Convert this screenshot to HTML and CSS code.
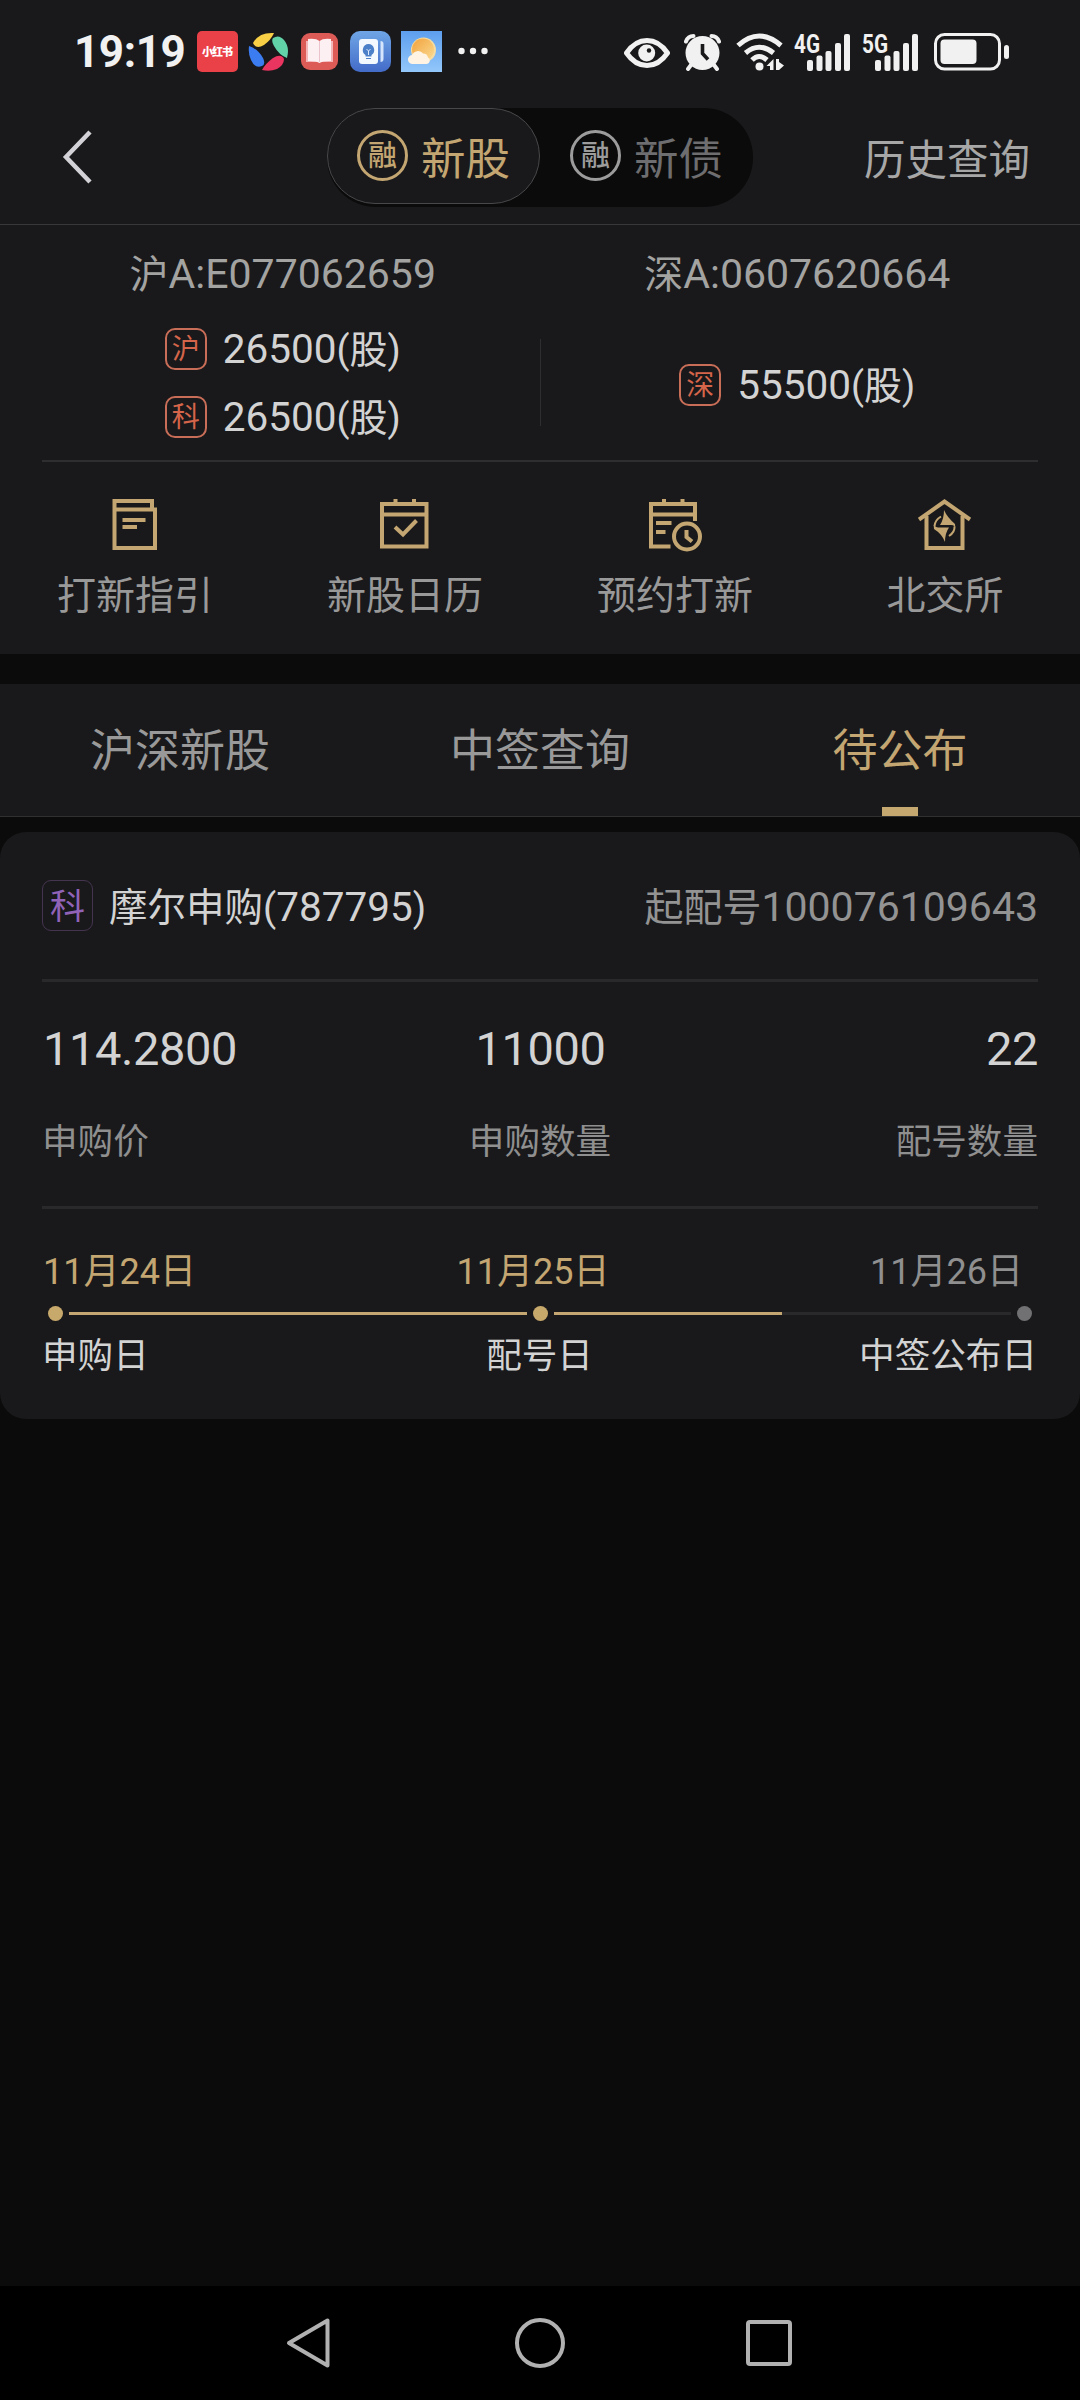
FILE: index.html
```html
<!DOCTYPE html>
<html lang="zh-CN">
  <head>
    <meta charset="UTF-8" />
    <meta name="viewport" content="width=device-width, initial-scale=1.0" />
    <title>新股申购</title>
    <link rel="stylesheet" href="styles.css" />
  </head>
  <body>
    <!-- Status bar -->
    <div class="status-bar">
      <span class="time">19:19</span>
      <div class="status-apps">
        <svg width="41" height="41" viewBox="0 0 41 41">
          <rect width="41" height="41" rx="5" fill="#ea4048" />
          <text class="xhs" x="20.5" y="25" text-anchor="middle" textLength="31">小红书</text>
        </svg>
        <svg width="41" height="41" viewBox="0 0 41 41">
          <path d="M5 12Q11 1 26 2Q23 9 16 14Q8 19 5 12Z" fill="#f8cf45" />
          <path d="M25 7Q31 3 36 9Q42 16 39 27Q31 24 26 15Q23 10 25 7Z" fill="#62d2a8" />
          <path d="M1 15Q10 18 15 27Q18 33 14 35Q7 38 3 29Q0 23 1 15Z" fill="#3b7cf0" />
          <path d="M14 39Q17 33 25 27Q33 22 36 28Q36 34 29 38Q22 41 14 39Z" fill="#ea3560" />
        </svg>
        <svg width="41" height="41" viewBox="0 0 41 41">
          <rect x="2" y="2" width="37" height="37" rx="9" fill="#dc5b56" />
          <path d="M7 10h27v21H7Z" fill="#f3b5b8" />
          <path d="M9 8q8-1 11.500 2q3.500-3 11.500-2v22q-8-.5-11.500 2q-3.500-2.500-11.500-2Z" fill="#fdf0f3" />
          <path d="M20.500 10v21" stroke="#eac3cc" />
        </svg>
        <svg width="41" height="41" viewBox="0 0 41 41">
          <defs>
            <linearGradient id="blueBg" x1="0" y1="0" x2="0" y2="1">
              <stop offset="0" stop-color="#6fa6e6" />
              <stop offset="1" stop-color="#436bc8" />
            </linearGradient>
          </defs>
          <rect width="41" height="41" rx="10" fill="url(#blueBg)" />
          <rect x="9" y="8" width="19" height="25" rx="3" fill="#f4f9ff" />
          <path d="M30.500 10q3 0 3 3v15q0 3-3 3Z" fill="#d5e5fb" />
          <path d="M18.500 13a6 6 0 0 1 3 11v1.500h-6V24a6 6 0 0 1 3-11Z" fill="#4c80c8" />
          <path d="M16 27.500h5" stroke="#4c80c8" fill="none" />
          <path d="M18.500 24v-4l-2-2M18.500 20l2-2" stroke="#dceafa" fill="none" />
        </svg>
        <svg width="41" height="41" viewBox="0 0 41 41">
          <defs>
            <linearGradient id="skyBg" x1="0" y1="0" x2="0" y2="1">
              <stop offset="0" stop-color="#5d9eee" />
              <stop offset="1" stop-color="#93c8fb" />
            </linearGradient>
            <linearGradient id="sunBg" x1="0" y1="0" x2="1" y2="1">
              <stop offset="0" stop-color="#f2a13c" />
              <stop offset="1" stop-color="#fbdc92" />
            </linearGradient>
          </defs>
          <rect width="41" height="41" fill="url(#skyBg)" />
          <circle cx="22.500" cy="19" r="12.500" fill="#f6dca0" />
          <circle cx="22" cy="18.500" r="11" fill="url(#sunBg)" />
          <path d="M12 33a4.500 4.500 0 0 1-1-9a6.500 6.500 0 0 1 11-1.500a5 5 0 0 1 5 4a3.500 3.500 0 0 1-1 6.500Z" fill="#fff4e4" />
        </svg>
      </div>
      <svg class="more" width="30" height="8" viewBox="0 0 30 8" fill="#f1f1f1">
        <circle cx="3.500" cy="4" r="3.200" />
        <circle cx="15" cy="4" r="3.200" />
        <circle cx="26.500" cy="4" r="3.200" />
      </svg>
      <div class="status-icons">
        <svg class="eye" width="46" height="38" viewBox="0 0 46 38">
          <path d="M2.500 20Q11 7.500 23 7.500T43.500 20Q35 32.500 23 32.500T2.500 20Z" fill="none" stroke="#f1f1f1" stroke-width="5" stroke-linejoin="round" />
          <circle cx="22.700" cy="20" r="8.500" fill="#f1f1f1" />
          <circle cx="25" cy="17.500" r="2.200" fill="#19191b" />
        </svg>
        <svg class="alarm" width="37" height="38" viewBox="0 0 37 38">
          <circle cx="18.500" cy="20" r="17" fill="#f1f1f1" />
          <path d="M2 8.500Q4 3 9.500 3M35 8.500Q33 3 27.500 3M7 32L4 36M30 32L33 36" stroke="#f1f1f1" stroke-width="4" stroke-linecap="round" />
          <path d="M18.500 11v9.500l5.500 6" fill="none" stroke="#19191b" stroke-width="3.600" stroke-linejoin="round" />
        </svg>
        <svg class="wifi" width="49" height="38" viewBox="0 0 49 38">
          <g fill="none" stroke="#f1f1f1" stroke-width="5">
            <path d="M3 12.500Q24 -6.500 46 12.500" />
            <path d="M10.500 20Q24 8.500 38.500 20" />
            <path d="M17 27Q24 20 32 27" />
          </g>
          <circle cx="24.500" cy="33.500" r="4" fill="#f1f1f1" />
          <path d="M38.500 37V26l-7 7h3.500v4zM41 26h3v3l5 3.500l-5 4.500H41Z" fill="#f1f1f1" />
        </svg>
        <svg class="signal" width="56" height="38" viewBox="0 0 56 38" fill="#f1f1f1">
          <text class="net" x="0" y="19.500" textLength="26" lengthAdjust="spacingAndGlyphs">4G</text>
          <rect x="13" y="27" width="6" height="11" rx="2" />
          <rect x="22.500" y="22.500" width="6" height="15.500" rx="2" />
          <rect x="31.500" y="18" width="6" height="20" rx="2" />
          <rect x="41" y="10" width="6" height="28" rx="2" />
          <rect x="50" y="1" width="6" height="37" rx="2" />
        </svg>
        <svg class="signal" width="56" height="38" viewBox="0 0 56 38" fill="#f1f1f1">
          <text class="net" x="0" y="19.500" textLength="26" lengthAdjust="spacingAndGlyphs">5G</text>
          <rect x="13" y="27" width="6" height="11" rx="2" />
          <rect x="22.500" y="22.500" width="6" height="15.500" rx="2" />
          <rect x="31.500" y="18" width="6" height="20" rx="2" />
          <rect x="41" y="10" width="6" height="28" rx="2" />
          <rect x="50" y="1" width="6" height="37" rx="2" />
        </svg>
        <svg class="battery" width="75" height="38" viewBox="0 0 75 38">
          <rect x="1.500" y="1.500" width="64" height="34.500" rx="9" fill="none" stroke="#f1f1f1" stroke-width="3" />
          <rect x="6.500" y="6.500" width="36" height="24.500" rx="4" fill="#f1f1f1" />
          <rect x="70" y="12" width="5" height="14" rx="2.500" fill="#f1f1f1" />
        </svg>
      </div>
    </div>

    <!-- Header -->
    <div class="header">
      <svg class="back" width="30" height="54" viewBox="0 0 30 54">
        <path d="M28 2L4 27L28 52" fill="none" stroke="#d3d2d6" stroke-width="4.500" />
      </svg>
      <div class="switch">
        <div class="switch-item active"><span class="ring">融</span>新股</div>
        <div class="switch-item"><span class="ring">融</span>新债</div>
      </div>
      <a class="history">历史查询</a>
    </div>

    <!-- Quota -->
    <div class="quota">
      <div class="quota-col">
        <div class="account">沪<span class="num">A:E077062659</span></div>
        <div class="amounts">
          <div class="amount"><span class="tag">沪</span><span><span class="num">26500</span>(股)</span></div>
          <div class="amount"><span class="tag">科</span><span><span class="num">26500</span>(股)</span></div>
        </div>
      </div>
      <div class="quota-line"></div>
      <div class="quota-col">
        <div class="account">深<span class="num">A:0607620664</span></div>
        <div class="amounts single">
          <div class="amount"><span class="tag">深</span><span><span class="num">55500</span>(股)</span></div>
        </div>
      </div>
    </div>

    <!-- Menu -->
    <div class="menu">
      <div class="menu-item">
        <svg width="54" height="54" viewBox="0 0 54 54" fill="none" stroke="#c3a671" stroke-width="4">
          <path d="M6.500 11.500V3H44V11.500M6.500 11.500H47V50H6.500Z" />
          <path d="M14.500 22H37.500M14.500 29H29" />
        </svg>
        <span>打新指引</span>
      </div>
      <div class="menu-item">
        <svg width="54" height="54" viewBox="0 0 54 54" fill="none" stroke="#c3a671" stroke-width="4">
          <path d="M4 6H48.500V48.500H4ZM4 16.500H48.500M17.500 1V6M36 1V6" />
          <path d="M17 29L25 36.500L38.500 22.500" />
        </svg>
        <span>新股日历</span>
      </div>
      <div class="menu-item">
        <svg width="54" height="54" viewBox="0 0 54 54" fill="none" stroke="#c3a671" stroke-width="4">
          <path d="M22.500 48.500H3V6H47V23M3 16.500H47M16 1V6M34.500 1V6" />
          <path d="M8 25H23.500M8 34H17.500" />
          <circle cx="39" cy="38.500" r="13" />
          <path d="M38.500 32V39L44 43.500" />
        </svg>
        <span>预约打新</span>
      </div>
      <div class="menu-item">
        <svg width="54" height="54" viewBox="0 0 54 54" fill="none" stroke="#c3a671" stroke-width="4">
          <path d="M1 21.500L26.500 3.500L52 21.500" />
          <path d="M8.500 18V50H44.500V18" />
          <path d="M26 12Q29 19 37 26Q38 29 36 32Q38 27 33 27H22Q26 21 26 12Z" fill="#c3a671" stroke="none" />
          <path d="M27 44Q24 36 16 31Q15 28 17 25Q16 29 20 29.500H31Q27 35 27 44Z" fill="#c3a671" stroke="none" />
          <path d="M23 18.500Q17 22 16.500 28M31 38Q37 34 36.500 28.500" stroke-width="2" />
        </svg>
        <span>北交所</span>
      </div>
    </div>

    <!-- Tabs -->
    <div class="tabs">
      <div class="tab">沪深新股</div>
      <div class="tab">中签查询</div>
      <div class="tab active">待公布</div>
    </div>

    <!-- Card -->
    <div class="card">
      <div class="card-head">
        <span class="board">科</span>
        <span class="name">摩尔申购(<span class="num">787795</span>)</span>
        <span class="start-no">起配号<span class="num">100076109643</span></span>
      </div>
      <div class="card-data">
        <div class="data-item">
          <div class="value">114.2800</div>
          <div class="label">申购价</div>
        </div>
        <div class="data-item">
          <div class="value">11000</div>
          <div class="label">申购数量</div>
        </div>
        <div class="data-item">
          <div class="value">22</div>
          <div class="label">配号数量</div>
        </div>
      </div>
      <div class="dates">
        <span class="done">11月24日</span>
        <span class="done">11月25日</span>
        <span>11月26日</span>
      </div>
      <div class="track">
        <i class="dot done"></i>
        <i class="bar done"></i>
        <i class="dot done"></i>
        <i class="bar half"></i>
        <i class="dot"></i>
      </div>
      <div class="steps">
        <span>申购日</span>
        <span>配号日</span>
        <span>中签公布日</span>
      </div>
    </div>

    <!-- System navigation -->
    <div class="nav-bar">
      <svg width="54" height="54" viewBox="0 0 54 54" fill="none" stroke="#b1b1b1" stroke-width="4">
        <path d="M5 27L43.500 4.500V49.500Z" stroke-linejoin="round" />
      </svg>
      <svg width="54" height="54" viewBox="0 0 54 54" fill="none" stroke="#b1b1b1" stroke-width="4">
        <circle cx="27" cy="27" r="23" />
      </svg>
      <svg width="54" height="54" viewBox="0 0 54 54" fill="none" stroke="#b1b1b1" stroke-width="4">
        <rect x="6" y="6" width="42" height="42" rx="2" />
      </svg>
    </div>
  </body>
</html>
```
FILE: styles.css
```css
* {
  margin: 0;
  padding: 0;
  box-sizing: border-box;
}

body {
  display: flex;
  flex-direction: column;
  width: 1080px;
  height: 2400px;
  background: #0b0b0b;
  color: #d3d3d3;
  font-family: Roboto, "Noto Sans CJK SC", sans-serif;
  font-size: 39px;
  overflow: hidden;
}

svg {
  display: block;
  flex-shrink: 0;
}

.num {
  font-size: 41px;
}

/* status bar */
.status-bar {
  display: flex;
  align-items: center;
  height: 103px;
  padding: 0 71px 0 74px;
  background: #19191b;
}

.time {
  width: 123px;
  color: #f1f1f1;
  font-size: 44px;
  font-weight: 700;
  letter-spacing: -0.4px;
}

.status-apps {
  display: flex;
  gap: 10px;
}

.xhs {
  fill: #fff;
  font-size: 11px;
  font-weight: 900;
}

.more {
  margin: 0 auto 2px 16px;
}

.status-icons {
  display: flex;
}

.alarm,
.wifi {
  margin-left: 14px;
}

.signal {
  margin-left: 10px;
  overflow: visible;
}

.signal + .signal {
  margin-left: 12px;
}

.battery {
  margin-left: 16px;
}

.net {
  font-size: 25px;
  font-weight: 700;
}

/* header */
.header {
  display: flex;
  align-items: center;
  height: 122px;
  padding: 0 50px 13px 62px;
  background: #19191b;
  border-bottom: 1px solid #38383a;
}

.switch {
  display: flex;
  width: 426px;
  height: 99px;
  margin-left: 235px;
  background: #0b0b0b;
  border-radius: 49px;
}

.switch-item {
  display: flex;
  align-items: center;
  gap: 13px;
  width: 213px;
  height: 96px;
  padding-left: 30px;
  color: #6e6e70;
  font-size: 44.5px;
}

.switch-item.active {
  padding-left: 29px;
  background: #19191b;
  border: 1px solid #48484a;
  border-radius: 48px;
  color: #c3a671;
}

.ring {
  width: 51px;
  height: 51px;
  border: 3px solid #9c9c9c;
  border-radius: 50%;
  color: #9c9c9c;
  font-size: 29px;
  font-weight: 500;
  line-height: 46px;
  text-align: center;
}

.active .ring {
  border-color: #c3a671;
  color: #c3a671;
}

.history {
  margin-left: auto;
  padding-bottom: 1px;
  color: #a7a7a7;
  font-size: 41.5px;
}

/* quota */
.quota {
  display: flex;
  align-items: flex-start;
  height: 237px;
  padding: 0 26px;
  background: linear-gradient(#2e2e30, #2e2e30) 42px 235px / 996px 2px no-repeat #19191b;
}

.quota-col {
  display: flex;
  flex: 1;
  flex-direction: column;
  align-items: center;
}

.account {
  padding-top: 24px;
  color: #a3a3a2;
  line-height: 50px;
}

.amounts {
  display: flex;
  flex-direction: column;
  justify-content: center;
  gap: 26px;
  height: 136px;
  margin-top: 15px;
}

.amounts.single {
  padding-top: 4px;
}

.amount {
  display: flex;
  align-items: center;
  gap: 16px;
  height: 42px;
  font-size: 38px;
  line-height: 42px;
}

.amount .num {
  font-size: 40.5px;
}

.tag {
  width: 42px;
  height: 42px;
  border: 2px solid #c86d57;
  border-radius: 10px;
  color: #d5654a;
  font-size: 28px;
  line-height: 39px;
  text-align: center;
}

.quota-line {
  width: 1px;
  height: 87px;
  margin-top: 114px;
  background: #2e2e30;
}

/* menu */
.menu {
  display: flex;
  height: 192px;
  padding-top: 36px;
  background: #19191b;
}

.menu-item {
  display: flex;
  flex: 1;
  flex-direction: column;
  align-items: center;
  gap: 19px;
  color: #999;
  line-height: 50px;
}

/* tabs */
.tabs {
  display: flex;
  height: 133px;
  margin-top: 30px;
  background: #19191b;
  border-bottom: 1px solid #303032;
}

.tab {
  display: flex;
  flex: 1;
  flex-direction: column;
  align-items: center;
  justify-content: space-between;
  color: #999;
  font-size: 45px;
  line-height: 136px;
}

.tab.active {
  height: 132px;
  color: #c3a671;
}

.tab.active::after {
  content: "";
  width: 36px;
  height: 9px;
  margin-top: -13px;
  background: #c5a870;
}

/* card */
.card {
  height: 587px;
  margin-top: 15px;
  padding: 0 42px;
  background: #19191b;
  border-radius: 26px;
}

.card-head {
  display: flex;
  align-items: center;
  height: 150px;
  border-bottom: 3px solid #29292b;
}

.board {
  width: 51px;
  height: 51px;
  border: 1px solid #45344f;
  border-radius: 9px;
  color: #9063b8;
  font-size: 35px;
  line-height: 53px;
  text-align: center;
}

.name {
  margin-left: 16px;
  padding-bottom: 3px;
  font-size: 38.5px;
}

.name .num {
  font-size: 40.5px;
}

.start-no {
  margin-left: auto;
  padding-bottom: 3px;
  color: #939393;
}

.card-data {
  display: grid;
  grid-template-columns: 1fr 1fr 1fr;
  height: 227px;
  padding-top: 41px;
  border-bottom: 3px solid #29292b;
}

.data-item:nth-child(2) {
  text-align: center;
}

.data-item:nth-child(3) {
  text-align: right;
}

.value {
  padding-left: 1px;
  font-size: 47px;
  letter-spacing: -0.4px;
  line-height: 52px;
}

.label {
  margin-top: 41px;
  color: #8f8f8f;
  font-size: 35.6px;
  line-height: 52px;
}

.dates {
  display: flex;
  justify-content: space-between;
  padding: 40px 15px 0 1px;
  color: #8f8f8f;
  font-size: 36px;
  line-height: 46px;
}

.dates .done {
  color: #c3a671;
}

.track {
  display: flex;
  align-items: center;
  gap: 6px;
  height: 15px;
  margin: 11px 6px 0;
}

.dot {
  width: 15px;
  height: 15px;
  border-radius: 50%;
  background: #717174;
}

.dot.done {
  background: #c8a96c;
}

.bar {
  flex: 1;
  height: 3px;
}

.bar.done {
  background: #c3a671;
}

.bar.half {
  background: linear-gradient(90deg, #c3a671 50%, #29292b 50%);
}

.steps {
  display: grid;
  grid-template-columns: 1fr 1fr 1fr;
  margin-top: 10px;
  padding-right: 1px;
  font-size: 35.6px;
  line-height: 50px;
}

.steps span:nth-child(2) {
  text-align: center;
}

.steps span:nth-child(3) {
  text-align: right;
}

/* system navigation */
.nav-bar {
  display: flex;
  align-items: center;
  justify-content: center;
  gap: 175px;
  height: 114px;
  margin-top: auto;
  background: #000;
}
```
